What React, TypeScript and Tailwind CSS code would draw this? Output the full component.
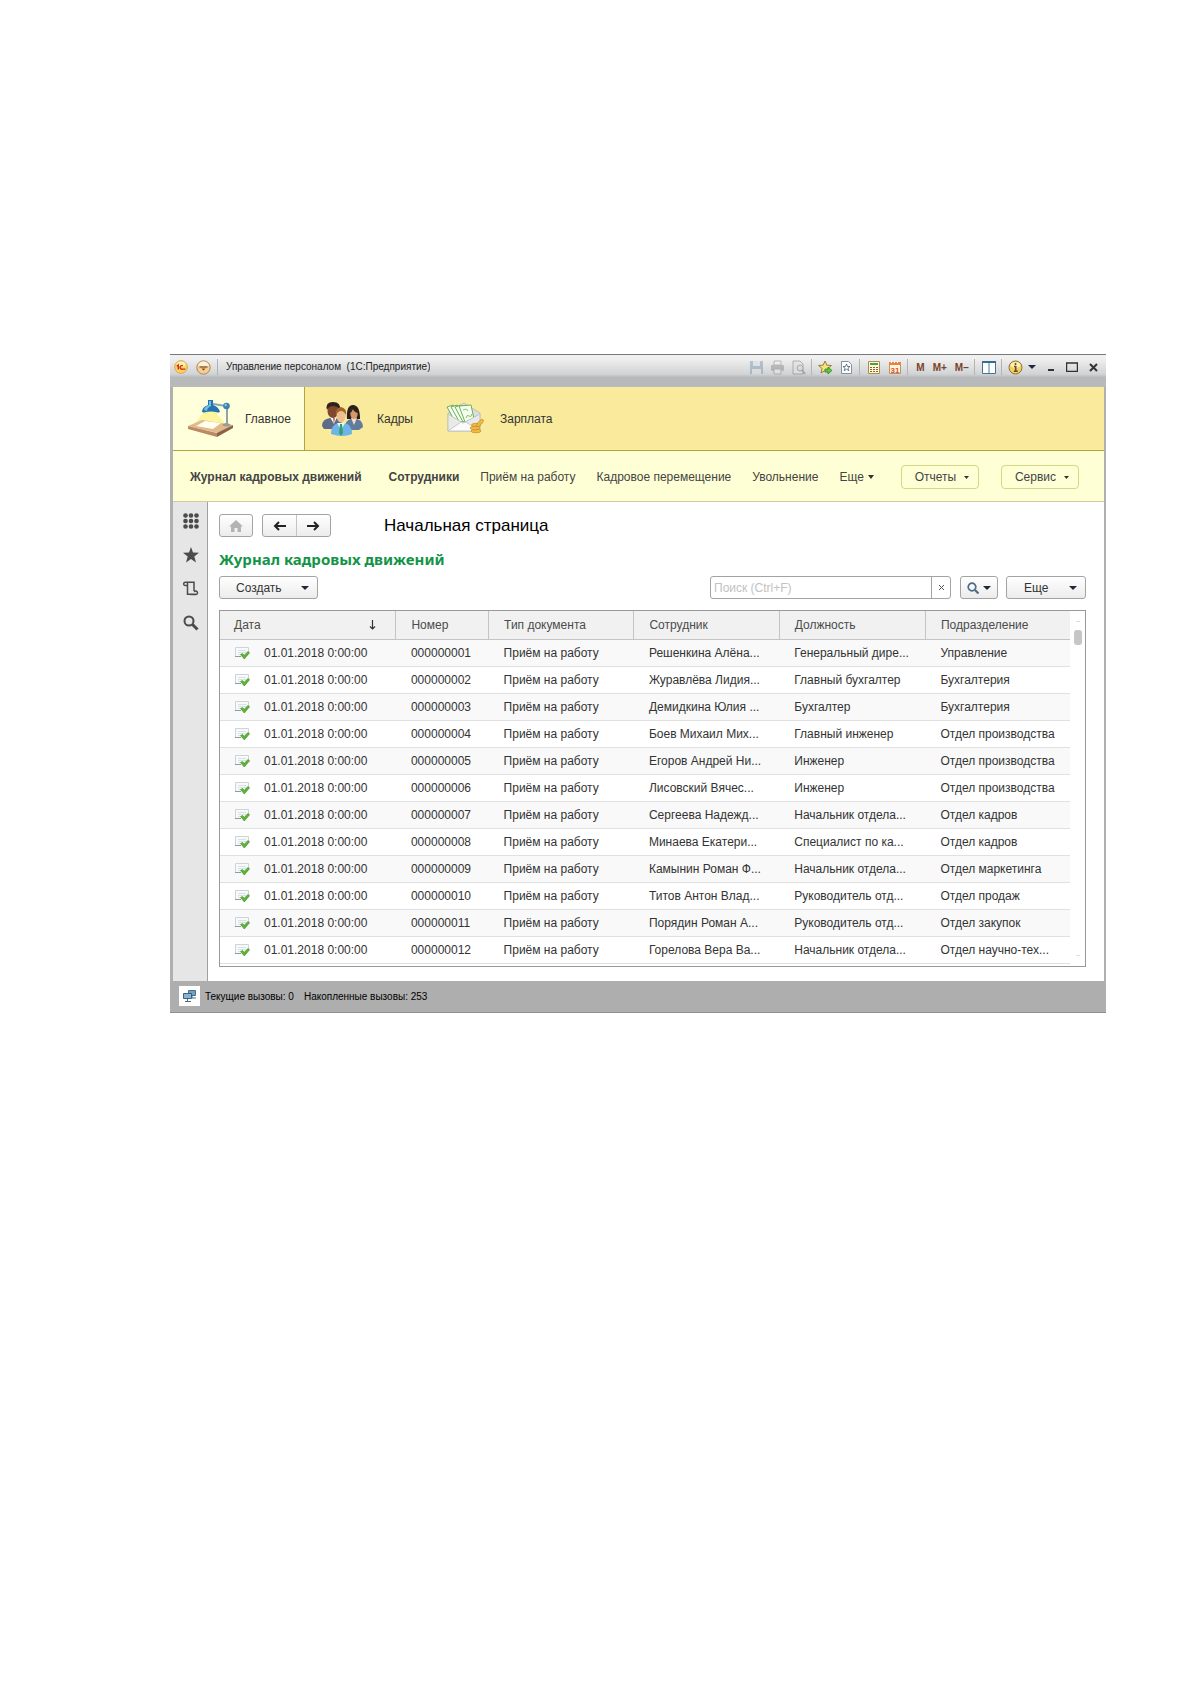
import { useState, type ReactNode } from 'react'

interface Movement {
  number: string
  employee: string
  position: string
  department: string
}

const movements: Movement[] = [
  { number: '000000001', employee: 'Решенкина Алёна...', position: 'Генеральный дире...', department: 'Управление' },
  { number: '000000002', employee: 'Журавлёва Лидия...', position: 'Главный бухгалтер', department: 'Бухгалтерия' },
  { number: '000000003', employee: 'Демидкина Юлия ...', position: 'Бухгалтер', department: 'Бухгалтерия' },
  { number: '000000004', employee: 'Боев Михаил Мих...', position: 'Главный инженер', department: 'Отдел производства' },
  { number: '000000005', employee: 'Егоров Андрей Ни...', position: 'Инженер', department: 'Отдел производства' },
  { number: '000000006', employee: 'Лисовский Вячес...', position: 'Инженер', department: 'Отдел производства' },
  { number: '000000007', employee: 'Сергеева Надежд...', position: 'Начальник отдела...', department: 'Отдел кадров' },
  { number: '000000008', employee: 'Минаева Екатери...', position: 'Специалист по ка...', department: 'Отдел кадров' },
  { number: '000000009', employee: 'Камынин Роман Ф...', position: 'Начальник отдела...', department: 'Отдел маркетинга' },
  { number: '000000010', employee: 'Титов Антон Влад...', position: 'Руководитель отд...', department: 'Отдел продаж' },
  { number: '000000011', employee: 'Порядин Роман А...', position: 'Руководитель отд...', department: 'Отдел закупок' },
  { number: '000000012', employee: 'Горелова Вера Ва...', position: 'Начальник отдела...', department: 'Отдел научно-тех...' },
]

const headers = ['Номер', 'Тип документа', 'Сотрудник', 'Должность', 'Подразделение']

function Caret({ className = 'text-gray-800' }: { className?: string }) {
  return (
    <svg width="8" height="4" viewBox="0 0 8 4" className={`shrink-0 ${className}`} aria-hidden="true">
      <path d="M0 0h8L4 4z" fill="currentColor" />
    </svg>
  )
}

function LogoIcon() {
  return (
    <svg width="14" height="14" viewBox="0 0 14 14" aria-hidden="true">
      <circle cx="7" cy="7" r="6.3" fill="#fbd75c" stroke="#d9a05b" />
      <ellipse cx="7" cy="4.2" rx="4.4" ry="2.6" fill="#fff3b5" />
      <path d="M2.800 6.200l1.500-1.200v4.500M8.800 5.800a1.800 1.800 0 1 0-.4 3.300h3" fill="none" stroke="#d6281c" strokeWidth="1.400" />
    </svg>
  )
}

function MenuIcon() {
  return (
    <svg width="15" height="15" viewBox="0 0 15 15" aria-hidden="true">
      <circle cx="7.500" cy="7.500" r="6.700" fill="#f9cd8d" stroke="#a98768" />
      <path d="M2 6a5.600 5.600 0 0 1 11 0z" fill="#fff0d8" />
      <path d="M3.500 7h8" stroke="#6b4a33" strokeWidth="1.200" />
      <path d="M5.500 8.500h4l-2 2z" fill="#6b4a33" />
    </svg>
  )
}

function LampIcon() {
  return (
    <svg width="48" height="40" viewBox="0 0 48 40" aria-hidden="true">
      <path d="M16 14L6 27l28 4 3-8-8-9z" fill="#fbf28d" opacity=".8" />
      <path d="M1 27l14-6 31 5-15 8z" fill="#e0b98d" />
      <path d="M1 27v3l29 8v-4z" fill="#b98a63" />
      <path d="M30 34v4l16-9v-3z" fill="#8c6244" />
      <path d="M9 27l9-5 16 2-8 6z" fill="#fffef0" />
      <path d="M40 7v18" stroke="#8fa3ab" strokeWidth="2" />
      <path d="M26 5l13 2" stroke="#7fa9bb" strokeWidth="2" />
      <circle cx="39.500" cy="7" r="3.300" fill="#3b83ad" />
      <circle cx="38.700" cy="6" r="1.200" fill="#8fc4de" />
      <path d="M35 26q4-4 9 0-4 3-9 0z" fill="#9a9c96" />
      <path d="M21 1h5v5q6 2 7 7-9 4-18 0 0-5 6-7z" fill="#2474ad" />
      <path d="M22 2h2v5q-4 2-4 5l-3-1q0-3 5-5z" fill="#75bde2" />
      <ellipse cx="24" cy="13.800" rx="7" ry="1.200" fill="#fff6a4" />
    </svg>
  )
}

function PeopleIcon() {
  return (
    <svg width="44" height="36" viewBox="0 0 44 36" aria-hidden="true">
      <path d="M1 25q0-7 8-8h6q6 2 7 9l-3 2H3z" fill="#5b6d89" />
      <path d="M9 16l4 7 3-7z" fill="#fff" />
      <path d="M12 17l1 7 1-7z" fill="#d15d4c" />
      <ellipse cx="12" cy="10" rx="5.500" ry="7" fill="#80482d" />
      <path d="M6 9Q4 1 12 1t7 8q-3-4-7-4T6 9z" fill="#30221c" />
      <path d="M26 18Q25 4 32 4t7 14z" fill="#29211f" />
      <path d="M24 27q0-8 6-9h6q6 2 6 8l-4 3H25z" fill="#617a9d" />
      <path d="M30 17l3 7 3-7z" fill="#f4dfcc" />
      <ellipse cx="33" cy="12.500" rx="3.700" ry="5.500" fill="#d79768" />
      <path d="M29 12q1-5 4-6 4 1 4 6-4-1-5-4-1 3-3 4z" fill="#29211f" />
      <path d="M10 33q0-9 7-11h6q8 1 8 11-9 4-21 0z" fill="#6db5e8" />
      <path d="M16 22l4 7 4-7z" fill="#e9f8ff" />
      <path d="M19 23h2l1 9-2 3-2-3z" fill="#36a06b" />
      <ellipse cx="20" cy="15" rx="4.500" ry="6.500" fill="#eec08f" />
      <path d="M15 14q-1-7 5-8 6 1 5 8-2-4-5-4t-5 4z" fill="#a3672e" />
    </svg>
  )
}

function MoneyIcon() {
  return (
    <svg width="38" height="34" viewBox="0 0 38 34" aria-hidden="true">
      <path d="M2 11L18 1l16 10v18H2z" fill="#dcdedc" stroke="#bfc1bf" />
      <g fill="#f6fff0" stroke="#69ae57">
        <path d="M1 5l6-2 9 14-6 4z" />
        <path d="M5 5l6-2 8 14-5 4z" />
        <path d="M9 5l6-2 7 14-5 3z" />
        <path d="M13 4l12-1 3 14-9 3z" />
      </g>
      <path d="M17 8q4-2 5 1M20 16q1-4 3-2t3-2" fill="none" stroke="#7cbf68" />
      <path d="M2 12l15 9 17-9v17H2z" fill="#e9eae8" stroke="#c3c5c3" />
      <path d="M2 29l13-9 2 1 3-1 14 9z" fill="#fbfbfa" stroke="#c9c9c9" />
      <g fill="#f0b93f" stroke="#bd8420" strokeWidth=".6">
        <ellipse cx="30" cy="29" rx="5" ry="1.800" />
        <ellipse cx="29" cy="26" rx="5" ry="1.800" />
        <ellipse cx="30" cy="23" rx="4.500" ry="1.700" />
        <ellipse cx="34" cy="21" rx="1.800" ry="4.500" transform="rotate(40 34 21)" />
      </g>
    </svg>
  )
}

function RowIcon() {
  return (
    <svg width="15" height="14" viewBox="0 0 15 14" className="shrink-0" aria-hidden="true">
      <path d="M.5 1.500h13v9H.5z" fill="#f7f9fb" />
      <path d="M.5 10V1.500h13V6" fill="none" stroke="#cdd4d9" />
      <path d="M0 10.500h6" stroke="#8f999f" />
      <path d="M3 4.500h8M3 6.500h8M3 8.500h2" stroke="#d8e1e8" />
      <path d="M5.500 8.500l2-1 1.700 1.800L13 5.500l1.600 1.200L9.300 13z" fill="#5fb534" stroke="#3d8a24" strokeWidth=".6" />
    </svg>
  )
}

const toolbarIcons: Record<string, ReactNode> = {
  save: (
    <g opacity=".5">
      <path d="M1 1h13v13H1z" fill="#7e9bb0" />
      <path d="M4 1h7v5H4zM3 9h9v5H3z" fill="#d5dfe6" />
    </g>
  ),
  print: (
    <g opacity=".5">
      <path d="M4 1h7v4H4z" fill="#f4f4f4" stroke="#888" />
      <rect x="1" y="5" width="13" height="6" rx="1" fill="#8e8e8e" />
      <path d="M4 9h7v5H4z" fill="#e8e8e8" stroke="#888" />
    </g>
  ),
  preview: (
    <g opacity=".5" fill="none" stroke="#777">
      <path d="M2 1h7l3 3v10H2z" fill="#e2e2e2" />
      <circle cx="9" cy="8" r="3" fill="#d2d8dd" />
      <path d="M11 10l3 4" strokeWidth="2" />
    </g>
  ),
  favourite: (
    <g>
      <path d="M7 1l1.800 4.200 4.700.3-3.600 3 1.100 4.500-4-2.400L3 13l1.100-4.500-3.600-3 4.700-.3z" fill="#fae477" stroke="#9a7f43" />
      <path d="M7 9h3V7l4 3.500-4 3.500v-2H7z" fill="#5cc934" stroke="#258321" strokeWidth=".7" />
    </g>
  ),
  favourites: (
    <g>
      <path d="M2.500 1.500h7l3 3v9h-10z" fill="#fdfdfd" stroke="#87919a" />
      <path d="M7.500 4l1 2.500h2.500L9 8.200l.8 2.500-2.300-1.500-2.300 1.500.8-2.500-2-1.700h2.500z" fill="#fff" stroke="#46627c" strokeWidth=".8" />
    </g>
  ),
  calculator: (
    <g>
      <path d="M2.500 1.500h11v12h-11z" fill="#fff7d9" stroke="#a88a52" />
      <path d="M4 3h8v2H4z" fill="#4c9e42" />
      <path d="M4 7.500h8M4 9.500h8M4 11.500h8" stroke="#8b6030" strokeDasharray="2 1" />
    </g>
  ),
  calendar: (
    <g>
      <path d="M2.500 2.500h11v11h-11z" fill="#fff5dc" stroke="#bc9463" />
      <path d="M2 2h12v3H2z" fill="#e78346" />
      <path d="M4.500 1v2M7.500 1v2M10.500 1v2" stroke="#fff" />
      <text x="3.500" y="13" fontSize="8" fontWeight="bold" fill="#e34e21" fontFamily="Liberation Sans, sans-serif">31</text>
    </g>
  ),
  panels: (
    <g>
      <path d="M1.500 1.500h13v12h-13z" fill="#fff" stroke="#467490" />
      <path d="M1 1h14v2H1z" fill="#356c90" />
      <path d="M8 3v10" stroke="#7caac8" strokeWidth="1.500" />
    </g>
  ),
  info: (
    <g>
      <circle cx="7.500" cy="7.500" r="6.500" fill="#f6cf61" stroke="#8d7136" />
      <ellipse cx="7.500" cy="5" rx="5" ry="3" fill="#fff1b1" />
      <path d="M7.500 3v2M6 6.500h1.700v4.500M5.800 11.300h4" stroke="#614f25" strokeWidth="1.600" fill="none" />
    </g>
  ),
}

function ToolIcon({ name, label }: { name: string; label: string }) {
  return (
    <button type="button" aria-label={label} className="flex h-4 w-4 items-center justify-center">
      <svg width="15" height="15" viewBox="0 0 15 15">{toolbarIcons[name]}</svg>
    </button>
  )
}

function Divider() {
  return <span className="h-4 w-px bg-[#b4b4b4]" />
}

function TitleBar() {
  return (
    <header className="flex h-[33px] items-start border-t border-[#77797b] bg-linear-to-b from-[#f0f0f0] from-10% via-[#d2d3d4] via-60% to-[#b8b9bb] to-70% pt-1 pr-2 pl-1 text-[#222]">
      <div className="flex h-4 min-w-0 flex-1 items-center">
        <button type="button" aria-label="1С:Предприятие" className="mr-2"><LogoIcon /></button>
        <button type="button" aria-label="Главное меню"><MenuIcon /></button>
        <span className="mr-2 ml-1.5 h-4 w-px bg-[#a9b4bc]" />
        <h1 className="truncate text-[10px] leading-4 whitespace-pre">Управление персоналом  (1С:Предприятие)</h1>
      </div>
      <div className="flex h-4 shrink-0 items-center text-[10px] font-bold text-[#7a432b]">
        <div className="flex gap-[5px]">
          <ToolIcon name="save" label="Сохранить" />
          <ToolIcon name="print" label="Печать" />
          <ToolIcon name="preview" label="Просмотр" />
        </div>
        <div className="ml-[5px] flex items-center gap-[5px]">
          <Divider />
          <ToolIcon name="favourite" label="Добавить в избранное" />
          <ToolIcon name="favourites" label="Избранное" />
        </div>
        <div className="ml-[5px] flex items-center gap-[5px]">
          <Divider />
          <ToolIcon name="calculator" label="Калькулятор" />
          <ToolIcon name="calendar" label="Календарь" />
        </div>
        <div className="ml-[5px] flex items-center gap-2">
          <Divider />
          <button type="button">M</button>
          <button type="button">M+</button>
          <button type="button">M−</button>
        </div>
        <div className="ml-[5px] flex items-center gap-[5px]">
          <Divider />
          <ToolIcon name="panels" label="Панели" />
        </div>
        <div className="ml-[5px] flex items-center gap-[5px]">
          <Divider />
          <ToolIcon name="info" label="Справка" />
          <Caret />
        </div>
        <div className="ml-3 flex items-center gap-[11px] text-[#333]">
          <button type="button" aria-label="Свернуть">
            <svg width="7" height="12" viewBox="0 0 7 12"><path d="M0 9h6" stroke="currentColor" strokeWidth="2" /></svg>
          </button>
          <button type="button" aria-label="Развернуть">
            <svg width="12" height="10" viewBox="0 0 12 10"><path d="M.5 1v8.500h11V1M0 1h12" fill="none" stroke="currentColor" strokeWidth="1.500" /></svg>
          </button>
          <button type="button" aria-label="Закрыть">
            <svg width="9" height="9" viewBox="0 0 9 9"><path d="M1 1l7 7M8 1L1 8" stroke="currentColor" strokeWidth="2" /></svg>
          </button>
        </div>
      </div>
    </header>
  )
}

const sections = [
  { name: 'Главное', icon: <LampIcon />, style: 'w-[132px] pl-[14px] gap-[10px]' },
  { name: 'Кадры', icon: <PeopleIcon />, style: 'w-[125px] pl-4 gap-3' },
  { name: 'Зарплата', icon: <MoneyIcon />, style: 'w-[131px] pl-4 gap-4' },
]

function SectionPanel() {
  const [active, setActive] = useState('Главное')

  return (
    <nav className="flex h-16 border-b border-[#b5a43c] bg-[#f9eb9b] text-[12px]">
      {sections.map((section) => (
        <button
          key={section.name}
          type="button"
          onClick={() => setActive(section.name)}
          className={`flex items-center border-r ${section.style} ${active === section.name ? 'border-[#b5a43c] bg-[#ffffdc]' : 'border-transparent'}`}
        >
          {section.icon}
          {section.name}
        </button>
      ))}
    </nav>
  )
}

function CommandPanel() {
  return (
    <nav className="flex h-[51px] items-center gap-[21px] border-b border-[#cfcf9e] bg-[#ffffd6] pt-0.5 pr-[25px] pl-[17px] text-[12px] whitespace-nowrap text-[#444]">
      <a href="#journal" className="pr-[6px] font-bold">Журнал кадровых движений</a>
      <a href="#employees" className="font-bold">Сотрудники</a>
      <a href="#hiring">Приём на работу</a>
      <a href="#transfer">Кадровое перемещение</a>
      <a href="#dismissal">Увольнение</a>
      <button type="button" className="flex items-center gap-1">
        Еще
        <svg width="6" height="4" viewBox="0 0 6 4"><path d="M0 0h6L3 4z" fill="#333" /></svg>
      </button>
      <div className="ml-auto flex gap-[22px]">
        {['Отчеты', 'Сервис'].map((name) => (
          <button key={name} type="button" className="flex h-6 w-[78px] items-center justify-center gap-2 rounded-sm border border-[#d6d68a] pl-1">
            {name}
            <svg width="5" height="3" viewBox="0 0 5 3"><path d="M0 0h5L2.500 3z" fill="#333" /></svg>
          </button>
        ))}
      </div>
    </nav>
  )
}

function SideBar() {
  return (
    <aside className="flex w-[35px] shrink-0 flex-col items-center gap-[18px] border-r border-[#a0a0a0] bg-[#e6e6e6] pt-[11px] pl-px text-[#4b4b4b]">
      <button type="button" aria-label="Меню функций">
        <svg width="16" height="16" viewBox="0 0 16 16" fill="currentColor">
          {[2.5, 8, 13.5].map((y) => [2.5, 8, 13.5].map((x) => <circle key={`${x}-${y}`} cx={x} cy={y} r="2.300" />))}
        </svg>
      </button>
      <button type="button" aria-label="Избранное">
        <svg width="16" height="16" viewBox="0 0 16 16" fill="currentColor">
          <path d="M8 0l2 5.600 6 .2-4.700 3.700L13 15.500l-5-3.600-5 3.600 1.700-6L0 5.800l6-.2z" />
        </svg>
      </button>
      <button type="button" aria-label="История">
        <svg width="16" height="16" viewBox="0 0 16 16" fill="none" stroke="currentColor" strokeWidth="1.500">
          <path d="M4.500 4.500H2.300a1.600 1.600 0 0 1 0-3.200H11V10M4.500 1.800v11.400h8.300M7.500 13.500h5.500a1.700 1.700 0 1 0-1.700-2.500" />
        </svg>
      </button>
      <button type="button" aria-label="Поиск">
        <svg width="16" height="16" viewBox="0 0 16 16" fill="none" stroke="currentColor">
          <circle cx="6" cy="6" r="4.500" strokeWidth="2" />
          <path d="M9.500 9.500l5 5" strokeWidth="3" />
        </svg>
      </button>
    </aside>
  )
}

const buttonStyle = 'flex h-[23px] items-center rounded-[3px] border border-[#a3a3a3] bg-linear-to-b from-white to-[#ececec]'

function Journal() {
  const [query, setQuery] = useState('')

  return (
    <main className="min-w-0 flex-1 bg-white pt-3 pr-[18px] pb-[14px] pl-[11px]">
      <div className="flex items-center">
        <button type="button" aria-label="Начальная страница" className={`${buttonStyle} w-[34px] justify-center`}>
          <svg width="14" height="12" viewBox="0 0 14 12"><path d="M7 0l7 6.500h-2V12H8.500V8h-3v4H2V6.500H0z" fill="#b3b3b3" /></svg>
        </button>
        <div className={`${buttonStyle} ml-[9px] w-[69px]`}>
          <button type="button" aria-label="Назад" className="flex h-full flex-1 items-center justify-center border-r border-[#c4c4c4]">
            <svg width="13" height="10" viewBox="0 0 13 10"><path d="M13 5H2M6 1L2 5l4 4" fill="none" stroke="#222" strokeWidth="2" /></svg>
          </button>
          <button type="button" aria-label="Вперед" className="flex h-full flex-1 items-center justify-center">
            <svg width="13" height="10" viewBox="0 0 13 10"><path d="M0 5h11M7 1l4 4-4 4" fill="none" stroke="#222" strokeWidth="2" /></svg>
          </button>
        </div>
        <h2 className="ml-[53px] text-[17px] leading-5 text-black">Начальная страница</h2>
      </div>
      <h3 className="mt-3 font-['Noto_Sans',sans-serif] text-[15px] leading-5 font-bold text-[#139447]">Журнал кадровых движений</h3>

      <div className="mt-[7px] flex h-[23px] items-center text-[12px] text-[#333]">
        <button type="button" className={`${buttonStyle} w-[99px] justify-between pr-2 pl-4`}>
          Создать
          <Caret />
        </button>
        <div className="ml-auto flex h-[23px] w-[241px] rounded-[3px] border border-[#a3a3a3] bg-white">
          <input
            type="text"
            aria-label="Поиск"
            value={query}
            onChange={(e) => setQuery(e.target.value)}
            placeholder="Поиск (Ctrl+F)"
            className="min-w-0 flex-1 px-[3px] outline-none placeholder:text-[#c2c2c2]"
          />
          <button type="button" aria-label="Очистить" onClick={() => setQuery('')} className="flex w-[19px] items-center justify-center border-l border-[#a3a3a3]">
            <svg width="5" height="5" viewBox="0 0 5 5"><path d="M0 0l5 5M5 0L0 5" stroke="#555" /></svg>
          </button>
        </div>
        <button type="button" aria-label="Параметры поиска" className={`${buttonStyle} ml-[9px] w-[38px] justify-center gap-1`}>
          <svg width="12" height="12" viewBox="0 0 12 12" fill="none" stroke="#4d6b8a">
            <circle cx="5" cy="5" r="3.800" strokeWidth="1.700" />
            <path d="M8 8l3.500 3.500" strokeWidth="2.200" />
          </svg>
          <Caret />
        </button>
        <button type="button" className={`${buttonStyle} ml-2 w-20 justify-between pr-2 pl-[17px]`}>
          Еще
          <Caret />
        </button>
      </div>

      <div className="mt-[11px] flex border border-[#999] pb-0.5">
        <table className="w-full flex-1 table-fixed border-collapse text-left text-[12px] text-[#333]">
          <colgroup>
            <col className="w-[20.7%]" />
            <col className="w-[10.9%]" />
            <col className="w-[17.1%]" />
            <col className="w-[17.1%]" />
            <col className="w-[17.2%]" />
            <col className="w-[17%]" />
          </colgroup>
          <thead>
            <tr className="h-7 border-b border-[#c4c4c4] bg-[#f1f1f1] text-[#4b4b4b]">
              <th className="border-r border-[#c4c4c4] pr-[19px] pl-[14px] font-normal" aria-sort="ascending">
                <span className="flex items-center justify-between">
                  Дата
                  <svg width="7" height="10" viewBox="0 0 7 10"><path d="M3.500 0v9M1 6.500L3.500 9 6 6.500" fill="none" stroke="#333" strokeWidth="1.200" /></svg>
                </span>
              </th>
              {headers.map((name) => (
                <th key={name} className="border-r border-[#c4c4c4] pl-[15px] font-normal last:border-r-0">{name}</th>
              ))}
            </tr>
          </thead>
          <tbody>
            {movements.map((row) => (
              <tr key={row.number} className="h-[27px] border-b border-[#e0e0e0] whitespace-nowrap odd:bg-[#f9f9f9]">
                <td className="pl-[15px]">
                  <span className="flex items-center gap-[14px]">
                    <RowIcon />
                    01.01.2018 0:00:00
                  </span>
                </td>
                <td className="pl-[15px]">{row.number}</td>
                <td className="pl-[15px]">Приём на работу</td>
                <td className="pl-[15px]">{row.employee}</td>
                <td className="pl-[15px]">{row.position}</td>
                <td className="pl-[15px]">{row.department}</td>
              </tr>
            ))}
          </tbody>
        </table>
        <div className="flex w-[15px] shrink-0 flex-col items-center justify-between pt-[10px] pb-2">
          <div className="flex flex-col items-center gap-2">
            <span className="h-px w-1 bg-[#ddd]" />
            <span className="h-[15px] w-2 rounded-[3px] bg-[#c6c6c6]" />
          </div>
          <span className="h-px w-1 bg-[#ddd]" />
        </div>
      </div>
    </main>
  )
}

function StatusBar() {
  return (
    <footer className="flex h-8 items-center border-b border-[#8f8f8f] bg-[#aeaeae] pl-[9px] text-[10px] text-black">
      <span className="mr-[5px] flex h-5 w-[21px] items-center justify-center bg-white">
        <svg width="14" height="12" viewBox="0 0 14 12" aria-hidden="true">
          <path d="M5.500.5h7v5h-7z" fill="#6fa1c8" stroke="#526b80" />
          <path d="M9 6v2h4" fill="none" stroke="#526b80" />
          <path d="M.5 3.500h8v5h-8z" fill="#83b4da" stroke="#425f78" />
          <path d="M4.500 9v2M2 11.500h6" stroke="#526b80" />
        </svg>
      </span>
      <span className="mr-[10px]">Текущие вызовы: 0</span>
      <span>Накопленные вызовы: 253</span>
    </footer>
  )
}

export default function App() {
  return (
    <div className="min-h-screen bg-white pt-[354px] pr-[84px] pb-16 pl-[170px] font-['Liberation_Sans',Arial,sans-serif] text-[#333]">
      <div className="bg-[#b5b5b5]">
        <TitleBar />
        <div className="border-r-2 border-l-3 border-[#b0b0b0]">
          <SectionPanel />
          <CommandPanel />
          <div className="flex">
            <SideBar />
            <Journal />
          </div>
        </div>
        <StatusBar />
      </div>
    </div>
  )
}
